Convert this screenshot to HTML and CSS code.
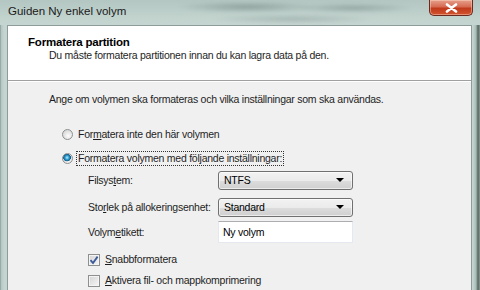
FILE: index.html
```html
<!DOCTYPE html>
<html lang="sv">

<head>
    <meta charset="UTF-8">
    <meta name="viewport" content="width=device-width, initial-scale=1.0">
    <title>Guiden Ny enkel volym</title>
    <link rel="stylesheet" href="styles.css">
</head>

<body>
    <div class="window">
        <div class="titlebar">
            <span class="title">Guiden Ny enkel volym</span>
            <span class="glass-blur"></span>
            <button class="close" type="button">
                <svg width="13" height="10" viewBox="0 0 13 10">
                    <path d="M2 1.5 L11 8.5 M11 1.5 L2 8.5" stroke="#fff" stroke-width="2.6" stroke-linecap="round" />
                </svg>
            </button>
        </div>

        <div class="client">
            <div class="header">
                <div class="header-title">Formatera partition</div>
                <div class="header-sub">Du måste formatera partitionen innan du kan lagra data på den.</div>
            </div>

            <div class="content">
                <p class="intro">Ange om volymen ska formateras och vilka inställningar som ska användas.</p>

                <div class="radios">
                    <label class="option">
                        <span class="radio"></span>
                        <span>For<u>m</u>atera inte den här volymen</span>
                    </label>
                    <label class="option">
                        <span class="radio checked"></span>
                        <span class="focus">Formatera volymen med följande inställningar:</span>
                    </label>
                </div>

                <div class="settings">
                    <span class="label">Filsys<u>t</u>em:</span>
                    <div class="combo">NTFS<span class="arrow"></span></div>

                    <span class="label">Sto<u>r</u>lek på allokeringsenhet:</span>
                    <div class="combo">Standard<span class="arrow"></span></div>

                    <span class="label">Volym<u>e</u>tikett:</span>
                    <div class="textbox">Ny volym</div>
                </div>

                <div class="checks">
                    <label class="option">
                        <span class="check">
                            <svg width="10" height="10" viewBox="0 0 10 10">
                                <path d="M1.5 5.2 L4 8 L8.6 1.6" fill="none" stroke="#3b5a9a" stroke-width="1.8" />
                            </svg>
                        </span>
                        <span><u>S</u>nabbformatera</span>
                    </label>
                    <label class="option">
                        <span class="check"></span>
                        <span><u>A</u>ktivera fil- och mappkomprimering</span>
                    </label>
                </div>
            </div>
        </div>
    </div>
</body>

</html>
```

FILE: styles.css
```css
body {
    margin: 0;
    overflow: hidden;
}

.window {
    width: 480px;
    height: 290px;
    box-sizing: border-box;
    padding: 0 8px 0 7px;
    display: flex;
    flex-direction: column;
    background: linear-gradient(to right, #7d8f8a 0, #b3c6c1 1px, #c4d4d0 4px, #c4d4d0 calc(100% - 7px), #a7bbb6 calc(100% - 4px), #55645f calc(100% - 2px), #8a9b96 100%);
    font-family: "Liberation Sans", Arial, sans-serif;
    font-size: 10.5px;
    letter-spacing: -0.25px;
    color: #1e1e1e;
}

/* title bar */

.titlebar {
    height: 25px;
    display: flex;
    align-items: flex-start;
    margin: 0 -8px 0 -7px;
    padding-left: 8px;
    background: linear-gradient(to bottom, #b3c6c1, #c2d3ce 70%, #c5d5d1);
}

.title {
    margin-top: 5px;
    font-size: 11.5px;
    letter-spacing: 0;
    color: #1a1a1a;
}

.glass-blur {
    flex: 1;
    height: 25px;
    background:
        radial-gradient(ellipse 70px 6px at 40% 7px, rgba(70, 90, 88, 0.35), transparent),
        radial-gradient(ellipse 60px 5px at 75% 8px, rgba(70, 90, 88, 0.3), transparent),
        radial-gradient(ellipse 80px 5px at 55% 19px, rgba(90, 110, 106, 0.25), transparent);
    filter: blur(1.5px);
}

.close {
    width: 44px;
    height: 16px;
    margin-right: 7px;
    padding: 0;
    border: 1px solid #6a2a20;
    border-top: none;
    border-radius: 0 0 5px 5px;
    background: linear-gradient(to bottom, #e6a08c 0, #d66b53 45%, #c03a1c 55%, #d4552f 100%);
    box-shadow: inset 0 0 0 1px rgba(255, 220, 200, 0.45);
    display: flex;
    align-items: center;
    justify-content: center;
}

/* client area */

.client {
    flex: 1;
    display: flex;
    flex-direction: column;
    border: 1px solid #8d9c99;
    border-bottom: none;
    background: #f0f0f0;
}

.header {
    height: 55px;
    box-sizing: border-box;
    padding: 9px 0 0 20px;
    background: #fff;
    border-bottom: 1px solid #a0a0a0;
    box-shadow: 0 1px 0 #fff;
}

.header-title {
    font-weight: bold;
    font-size: 11.5px;
    line-height: 14px;
    letter-spacing: -0.2px;
    color: #000;
}

.header-sub {
    margin-left: 21px;
    line-height: 12px;
}

.content {
    padding: 12px 0 0 41px;
}

.intro {
    margin: 0;
    line-height: 13px;
}

.option {
    display: flex;
    align-items: center;
    gap: 5px;
    line-height: 13px;
}

.radios {
    margin: 22px 0 0 13px;
    display: flex;
    flex-direction: column;
    gap: 11px;
}

.radio {
    width: 11px;
    height: 11px;
    border-radius: 50%;
    border: 1px solid #8e8f8f;
    background: radial-gradient(circle at 60% 65%, #fdfdfd, #dadada 70%, #c9c9c9);
    box-sizing: border-box;
}

.radio.checked {
    background:
        radial-gradient(circle at 45% 40%, #b9f0ff 0, #2f9bd0 2px, #0e5a86 3.6px, transparent 4px),
        radial-gradient(circle at 60% 65%, #fdfdfd, #dadada 70%, #c9c9c9);
}

.focus {
    outline: 1px dotted #333;
    padding: 0 1px;
    margin-left: -1px;
}

.settings {
    margin: 1px 0 0 39px;
    display: grid;
    grid-template-columns: 130px 135px;
    grid-template-rows: 28px 26px 24px;
    align-items: center;
}

.label {
    white-space: nowrap;
}

.combo {
    height: 19px;
    box-sizing: border-box;
    border: 1px solid #707070;
    border-radius: 3px;
    padding-left: 5px;
    display: flex;
    align-items: center;
    justify-content: space-between;
    background: linear-gradient(to bottom, #f2f2f2 0, #ebebeb 50%, #dddddd 51%, #cfcfcf 100%);
    box-shadow: inset 0 0 0 1px rgba(255, 255, 255, 0.6);
    color: #000;
}

.arrow {
    width: 0;
    height: 0;
    margin-right: 8px;
    border-left: 4px solid transparent;
    border-right: 4px solid transparent;
    border-top: 4px solid #000;
}

.textbox {
    height: 22px;
    box-sizing: border-box;
    border: 1px solid #e3e9ef;
    border-top-color: #abadb3;
    padding-left: 4px;
    display: flex;
    align-items: center;
    background: #fff;
    color: #000;
}

.checks {
    margin: 9px 0 0 39px;
    display: flex;
    flex-direction: column;
    gap: 8px;
}

.check {
    width: 12px;
    height: 12px;
    box-sizing: border-box;
    border: 1px solid #8e8f8f;
    background: linear-gradient(135deg, #d4d4d4, #f6f6f6);
    box-shadow: inset 0 0 0 1px #f4f4f4;
    display: flex;
    align-items: center;
    justify-content: center;
}
```
